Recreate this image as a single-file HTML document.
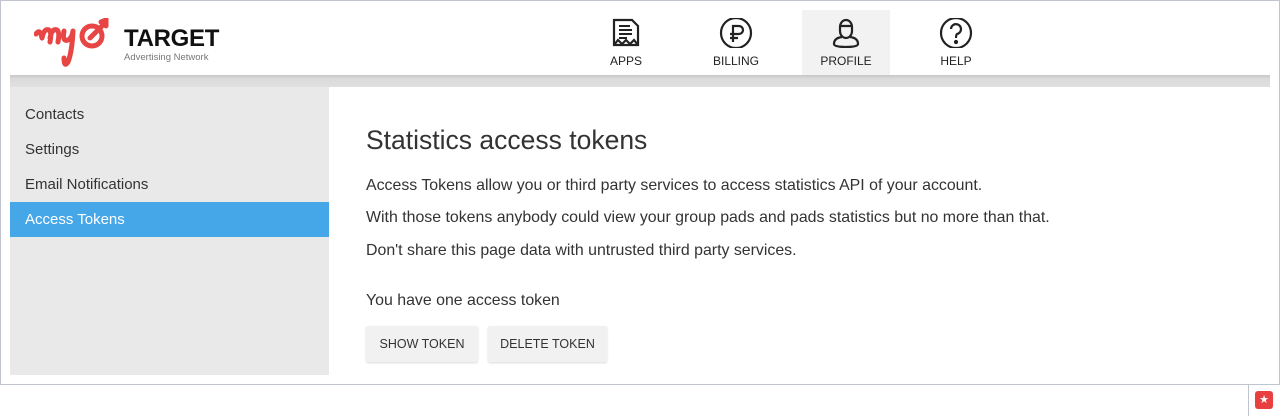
<!DOCTYPE html>
<html><head><meta charset="utf-8"><style>
*{margin:0;padding:0;box-sizing:border-box}
body{width:1280px;height:416px;background:#fff;font-family:"Liberation Sans",sans-serif;position:relative;overflow:hidden;color:#333}
.frame{position:absolute;left:0;top:0;width:1280px;height:385px;border:1px solid #bfc4cf}
.abs{position:absolute}
.bar{left:10px;top:75px;width:1260px;height:12px;background:linear-gradient(#c6c6c6,#dadada 30%,#e0e0e0)}
.side{left:10px;top:87px;width:319px;height:288px;background:#e9e9e9}
.side div{height:35px;line-height:35px;padding-left:15px;font-size:15px;color:#333}
.side .act{background:#45a7e8;color:#fff}
.panel{left:329px;top:87px;width:941px;height:288px;background:#fff}
.nav{top:10px;width:88px;height:65px;text-align:center;font-size:12px;color:#222}
.nav svg{display:block;margin:8px auto 6px}
h1{position:absolute;left:366px;top:125px;font-weight:normal;font-size:26.5px;color:#333}
p{position:absolute;left:366px;font-size:15.9px;color:#333}
.btn{position:absolute;top:326px;height:36px;background:#f1f1f1;box-shadow:0 1px 2px rgba(0,0,0,.15);font-size:12.5px;line-height:36px;text-align:center;color:#333;border-radius:2px}
</style></head><body>
<div class="frame"></div>
<div class="abs" style="left:34px;top:18px;width:100px;height:52px">
<svg width="95" height="52" viewBox="0 0 95 52"><g fill="none" stroke="#e84545" stroke-width="5" stroke-linecap="round"><path d="M2 16 Q6 10 8 20 M8 20 Q10 10 15 12 Q18 14 16 24 M16 20 Q18 10 23 12 Q26 14 24 24"/><path d="M30 13 Q28 24 34 22 Q38 20 39 13 M39 13 Q38 34 34 44 Q30 50 30 40"/><circle cx="58" cy="18" r="10"/><path d="M56 20 L70 6 M67 4 L72 2 L72 8"/></g></svg>
</div>
<div class="abs" style="left:124px;top:25px;font-weight:bold;font-size:24px;color:#111;letter-spacing:-0.3px">TARGET</div>
<div class="abs" style="left:124px;top:52px;font-size:9.5px;color:#777">Advertising Network</div>

<div class="abs nav" style="left:582px"><svg width="30" height="30" viewBox="0 0 30 30" fill="none" stroke="#222" stroke-width="2.2"><path d="M3 2h18l6 6v19h-24z"/><path d="M8 8h11M8 12h13M8 16h13M8 20h8" stroke-width="2"/><path d="M3 27l4-5 4 4 4-4 4 4 4-4 4 5"/></svg>APPS</div>
<div class="abs nav" style="left:692px"><svg width="36" height="30" viewBox="0 0 36 30" fill="none" stroke="#222" stroke-width="2.2"><circle cx="18" cy="15" r="15"/><path d="M15 24V8h6a4 4 0 0 1 0 8h-9M12 20h8"/></svg>BILLING</div>
<div class="abs nav" style="left:802px;background:#f2f2f2"><svg width="32" height="30" viewBox="0 0 32 30" fill="none" stroke="#222" stroke-width="2.2"><path d="M10 9a6 7 0 0 1 12 0v4a6 7 0 0 1-12 0z M10 8l12 0"/><path d="M12 19Q4 20 4 26q0 3 12 3t12-3q0-6-8-7"/></svg>PROFILE</div>
<div class="abs nav" style="left:912px"><svg width="36" height="30" viewBox="0 0 36 30" fill="none" stroke="#222" stroke-width="2.2"><circle cx="18" cy="15" r="15"/><path d="M13 11a5 5 0 1 1 6 5q-1 1-1 4"/><circle cx="18" cy="24" r="1" fill="#222"/></svg>HELP</div>

<div class="abs bar"></div>
<div class="abs side" style="padding-top:10px"><div>Contacts</div><div>Settings</div><div>Email Notifications</div><div class="act">Access Tokens</div></div>
<div class="abs panel"></div>
<h1>Statistics access tokens</h1>
<p style="top:177px">Access Tokens allow you or third party services to access statistics API of your account.</p>
<p style="top:209px">With those tokens anybody could view your group pads and pads statistics but no more than that.</p>
<p style="top:242px">Don't share this page data with untrusted third party services.</p>
<p style="top:292px">You have one access token</p>
<div class="btn" style="left:366px;width:112px">SHOW TOKEN</div>
<div class="btn" style="left:488px;width:119px">DELETE TOKEN</div>
<div class="abs" style="left:1248px;top:384px;width:1px;height:32px;background:#bfc4cf"></div>
<div class="abs" style="left:1255px;top:391px;width:18px;height:18px;background:#e84040;border-radius:3px;color:#fff;font-size:11px;line-height:18px;text-align:center">★</div>
</body></html>
